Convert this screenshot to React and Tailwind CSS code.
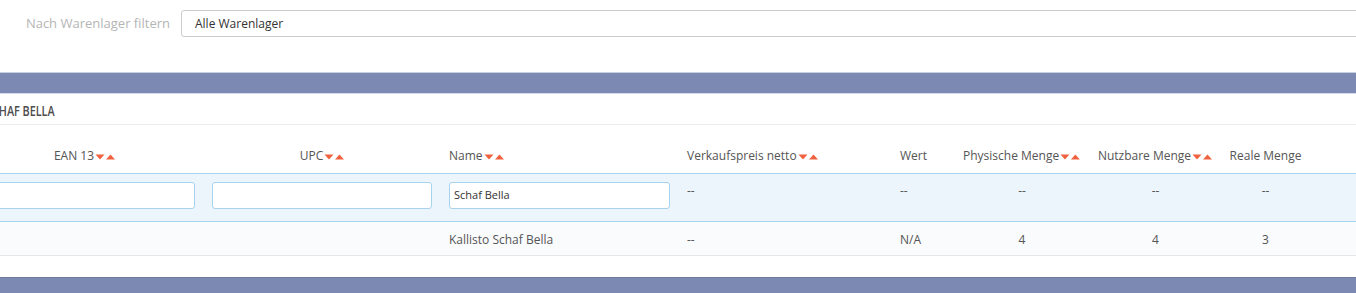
import React from 'react';

const SortArrows = () => (
  <svg width="21" height="7" viewBox="0 0 21 7" className="ml-[1px] inline-block">
    <path d="M0.5 1.5 L9.5 1.5 L5 6.5 Z" fill="#f0623f" />
    <path d="M11 6.5 L20 6.5 L15.5 1.5 Z" fill="#f0623f" />
  </svg>
);

const grid =
  'grid grid-cols-[238px_237px_238px_213px_63px_134px_133px_87px_1fr] -ml-[34px]';

const Header = ({ children, sort, align = 'left' }) => (
  <div
    className={`px-[8px] h-[18px] flex items-center whitespace-nowrap ${
      align === 'center' ? 'justify-center' : 'justify-start'
    }`}
  >
    <span className="leading-[18px]">{children}</span>
    {sort && <SortArrows />}
  </div>
);

const FilterInput = ({ value }) => (
  <div className="pl-[8px] pr-[9px]">
    <div className="h-[27px] rounded-[3px] border border-[#a7d3ef] bg-white pl-[4px] flex items-center text-[#333] text-[11px]">
      {value}
    </div>
  </div>
);

const App = () => {
  return (
    <div
      className="w-[1356px] h-[293px] overflow-hidden bg-white text-[12px] text-[#555]"
      style={{ fontFamily: '"Open Sans", "Liberation Sans", sans-serif' }}
    >
      {/* Lagerfilter */}
      <div className="h-[72px] flex items-start pt-[10px]">
        <label className="w-[181px] pr-[11px] text-right leading-[27px] text-[13px] text-[#b5b5b5]">
          Nach Warenlager filtern
        </label>
        <div className="flex-1 -mr-[4px] h-[27px] rounded-[3px] border border-[#cccccc] pl-[13px] flex items-center text-[12px] text-[#333]">
          Alle Warenlager
        </div>
      </div>

      {/* Panel oben */}
      <div className="border-t border-[#c9cede]" />
      <div className="h-[20px] bg-[#7b89b3]" />
      <div className="border-t border-[#d3d9ee]" />

      <div className="h-[31px] border-b border-[#ececec] flex items-center justify-start overflow-hidden pt-[2px]">
        <span className="-ml-[14px] inline-block origin-left scale-x-[0.72] text-[15px] font-semibold text-[#4d4d4d] whitespace-nowrap">
          SCHAF BELLA
        </span>
      </div>

      {/* Tabellenkopf */}
      <div className={`${grid} h-[48px] pt-[22px]`}>
        <Header sort align="center">EAN 13</Header>
        <Header sort align="center">UPC</Header>
        <Header sort>Name</Header>
        <Header sort>Verkaufspreis netto</Header>
        <Header>Wert</Header>
        <Header sort align="center">Physische Menge</Header>
        <Header sort align="center">Nutzbare Menge</Header>
        <Header align="center">Reale Menge</Header>
        <div />
      </div>

      {/* Filterzeile */}
      <div className="border-t border-[#a7d3ef] border-b bg-[#ecf5fb]">
        <div className={`${grid} h-[47px] pt-[8px]`}>
          <FilterInput />
          <FilterInput />
          <FilterInput value="Schaf Bella" />
          <div className="px-[8px] leading-[18px]">--</div>
          <div className="px-[8px] leading-[18px]">--</div>
          <div className="px-[8px] leading-[18px] text-center">--</div>
          <div className="px-[8px] leading-[18px] text-center">--</div>
          <div className="px-[8px] leading-[18px] text-center">--</div>
          <div />
        </div>
      </div>

      {/* Datenzeile */}
      <div className="bg-[#fafbfd] border-b border-[#e6e6e6]">
        <div className={`${grid} h-[33px] items-center pt-[2px]`}>
          <div />
          <div />
          <div className="px-[8px]">Kallisto Schaf Bella</div>
          <div className="px-[8px]">--</div>
          <div className="px-[8px]">N/A</div>
          <div className="px-[8px] text-center">4</div>
          <div className="px-[8px] text-center">4</div>
          <div className="px-[8px] text-center">3</div>
          <div />
        </div>
      </div>

      <div className="h-[21px]" />

      {/* Panel unten */}
      <div className="border-t border-[#6e799e]" />
      <div className="h-[20px] bg-[#7b89b3]" />
    </div>
  );
};

export default App;
